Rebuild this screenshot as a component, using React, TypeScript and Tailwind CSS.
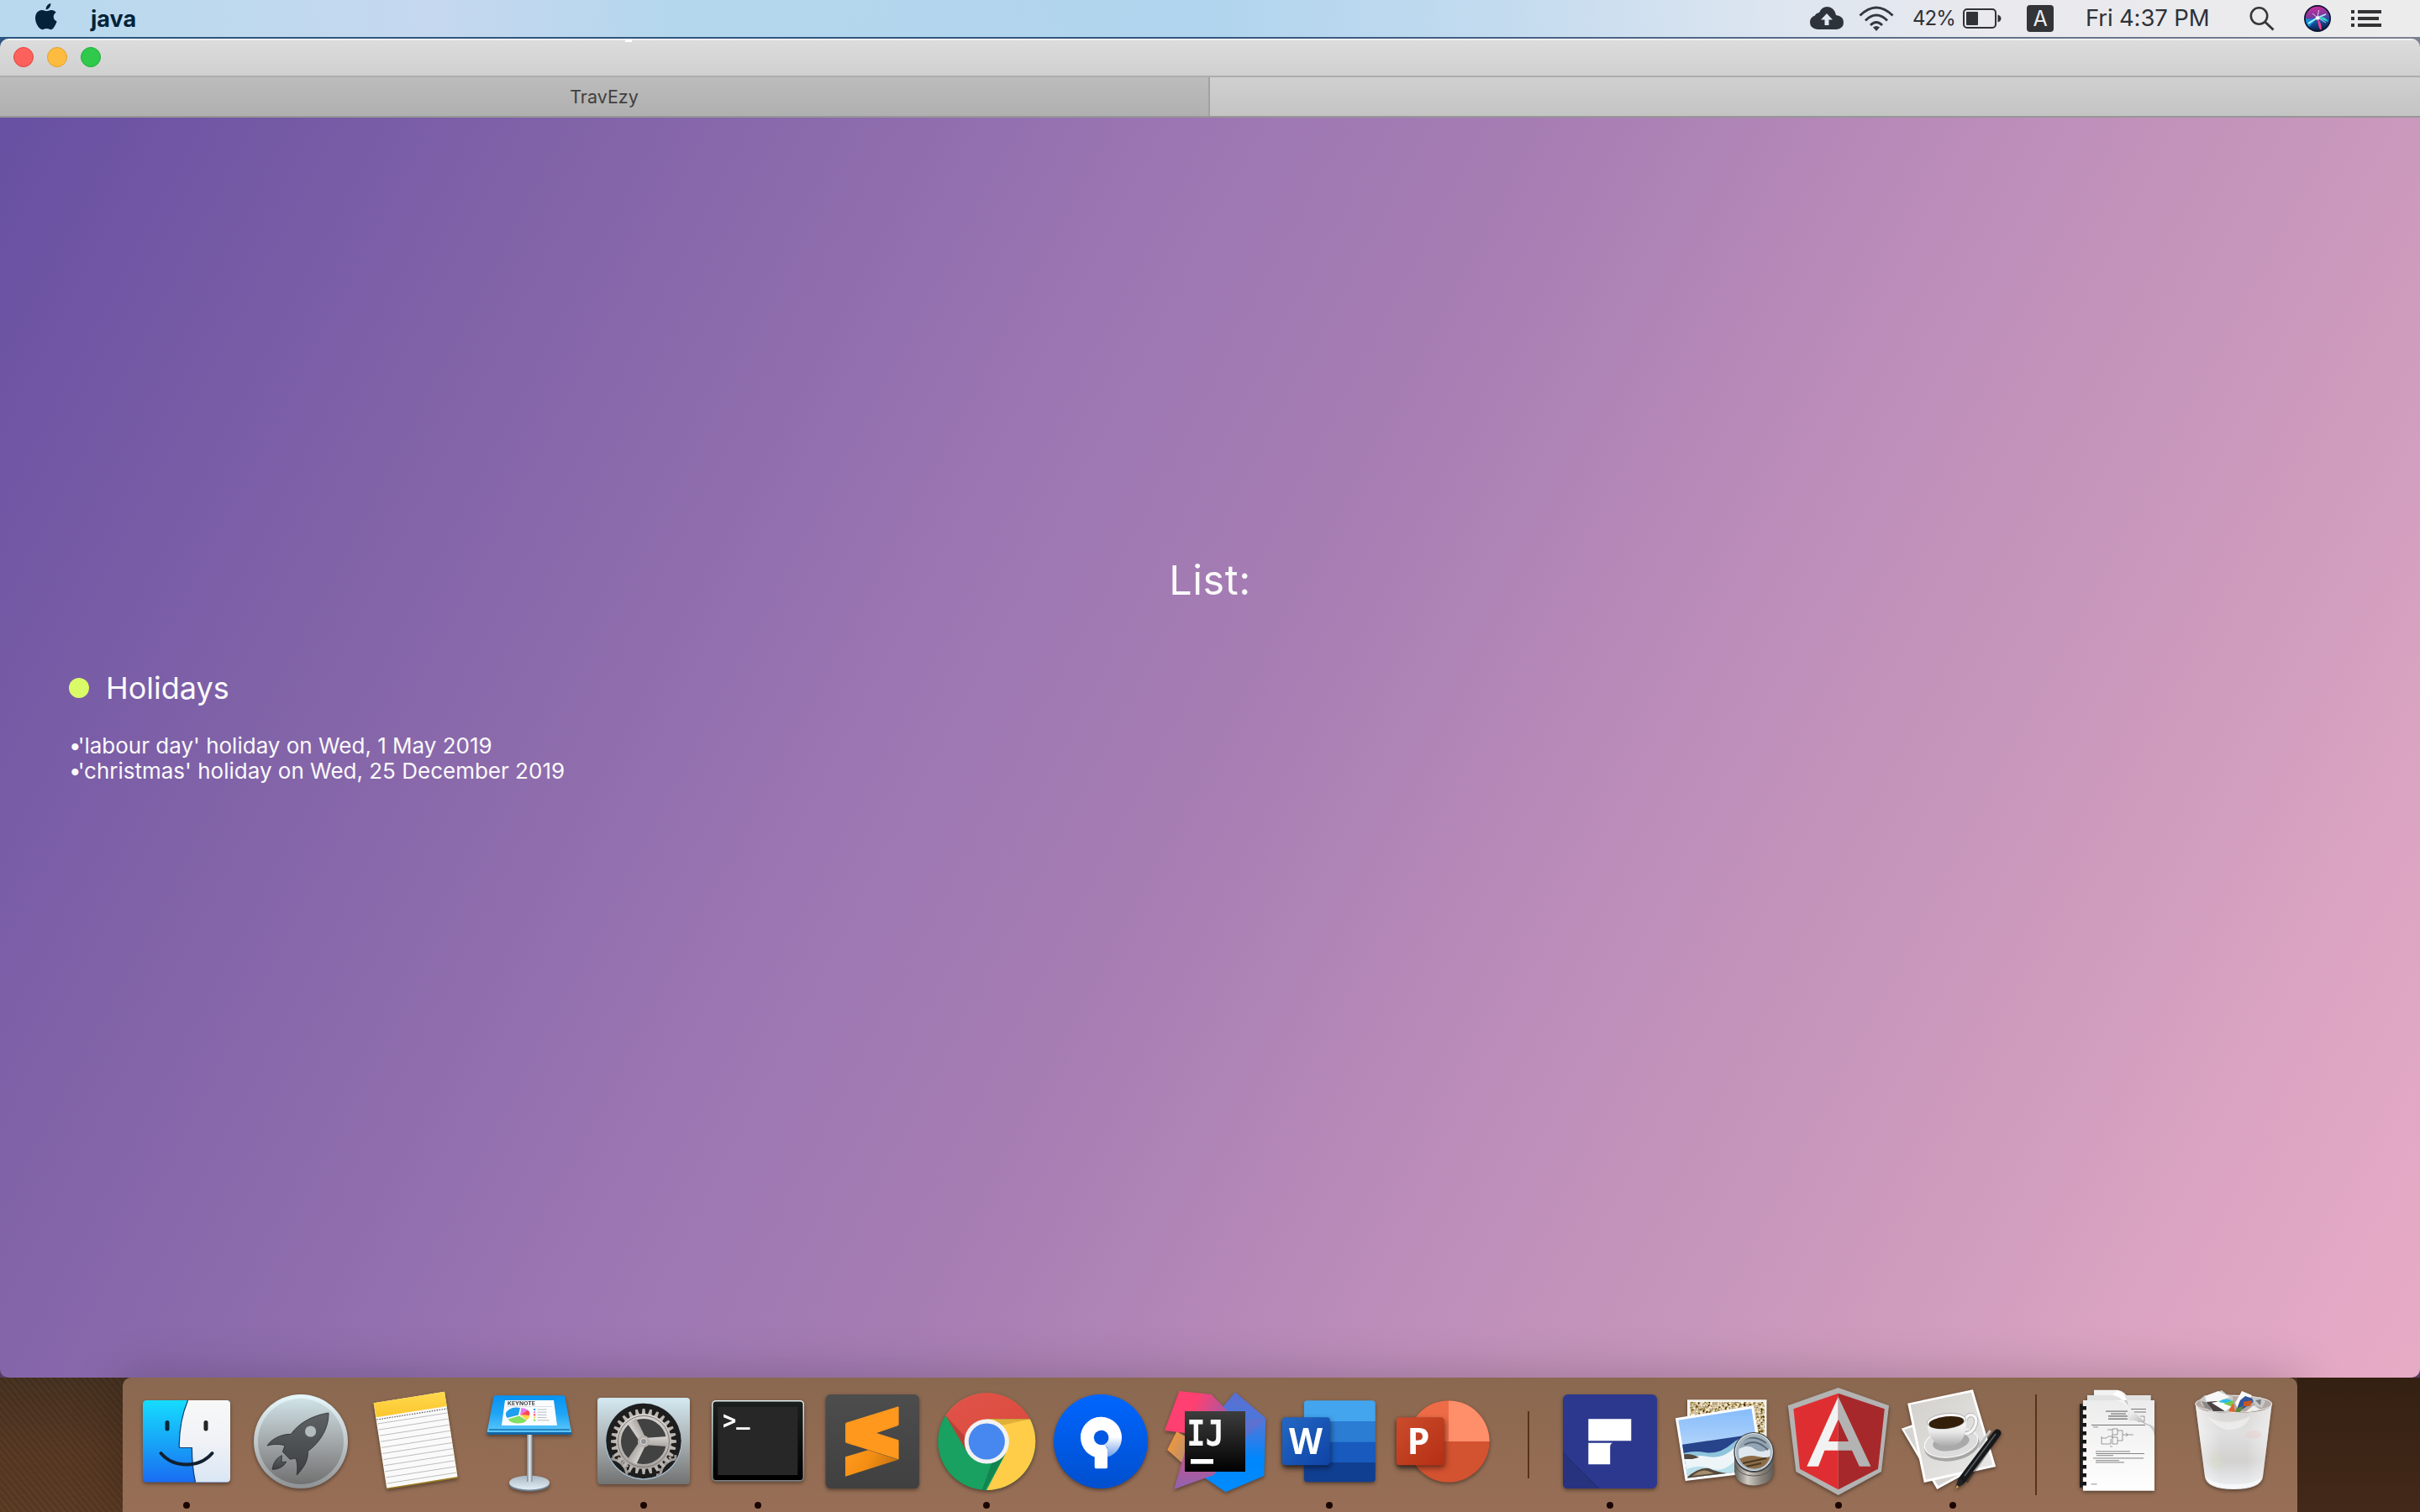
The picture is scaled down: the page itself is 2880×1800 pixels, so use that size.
import React from 'react';

type ArtProps = { children: React.ReactNode; running?: boolean };

function Slot({ children, running }: ArtProps) {
  return (
    <svg className="h-[160px] w-[136px] shrink-0" viewBox="0 0 136 160">
      <g className="drop-shadow-[0_2px_2px_rgba(0,0,0,0.4)]">{children}</g>
      {running && <circle cx="68" cy="152" r="4" fill="#1a0503" />}
    </svg>
  );
}

function Grad({ id, stops, x2 = 0, y2 = 1 }: { id: string; stops: string[]; x2?: number; y2?: number }) {
  return (
    <linearGradient id={id} x1="0" y1="0" x2={x2} y2={y2}>
      {stops.map((c, i) => (
        <stop key={i} offset={i / (stops.length - 1)} stopColor={c} />
      ))}
    </linearGradient>
  );
}

function Finder() {
  return (
    <Slot running>
      <defs>
        <Grad id="fB" stops={['#16dcff', '#17a6f7', '#1a6cf2']} />
        <Grad id="fW" stops={['#f8f8f8', '#f0f2f6', '#d9e6f4']} />
      </defs>
      <rect x="16" y="27" width="104" height="97.5" rx="4.5" fill="url(#fB)" />
      <path d="M69.6 27H115.500Q120 27 120 31.500V120Q120 124.500 115.500 124.500H78.500Q74.500 106 74.400 83.500H61Q59 83.500 59.200 81.500Q59.500 51 69.600 27Z" fill="url(#fW)" />
      <path d="M69.600 27Q59.500 51 59.200 81.500Q59 83.500 61 83.500H74.400Q74.500 106 78.500 124.500" fill="none" stroke="#0b3e75" strokeWidth="1.2" />
      <path d="M45 53.500V61" stroke="#04283a" strokeWidth="5" strokeLinecap="round" />
      <path d="M91 53.500V61" stroke="#252525" strokeWidth="5" strokeLinecap="round" />
      <path d="M37.500 90C53 108 83 108 98.500 90" fill="none" stroke="#12202f" strokeWidth="4" strokeLinecap="round" />
    </Slot>
  );
}

function Launchpad() {
  return (
    <Slot>
      <defs>
        <Grad id="lR" stops={['#e6f8fc', '#c0c8cb', '#8f9294']} />
        <Grad id="lF" stops={['#cfe2e6', '#a3a8aa', '#717171']} />
        <Grad id="lK" stops={['#5e6264', '#3d4042']} />
      </defs>
      <circle cx="68" cy="76" r="56" fill="url(#lR)" />
      <circle cx="68" cy="76" r="51" fill="url(#lF)" />
      <g fill="url(#lK)" stroke="#2a2c2e" strokeWidth="0.8">
        <path d="M101 42C80 45 64 56 56.400 67.300C45 67 33 73 28 81C37 78.500 44 79.500 49 80.700L46.400 88.300L55 97.300L62 96C64.500 104 64 110 63.200 116C72 107 77 98 76.400 87.700C91 77 101.500 60 101 42Z" />
        <path d="M45.400 92.700C38 96 35 103 34 109.300C41 109.500 48 106 50.700 100L45 101Z" />
      </g>
      <circle cx="79.600" cy="64" r="6.600" fill="#b4bbbe" />
    </Slot>
  );
}

function Notes() {
  return (
    <Slot>
      <defs>
        <Grad id="nY" stops={['#ffd94f', '#fcc62c']} />
      </defs>
      <path d="M18.600 30.300L103 16.700L119 119.800L34.400 133Z" fill="#9a7b20" />
      <path d="M18.600 30.300L103 16.700L118.500 118L34.200 131.500Z" fill="#fafafa" />
      <path d="M18.600 30.300L103 16.700L105.800 34L21.900 47.300Z" fill="url(#nY)" />
      <path d="M22.500 50L106 37" stroke="#555" strokeWidth="1.2" strokeDasharray="1.500 1.500" />
      {Array.from({ length: 11 }, (_, i) => (
        <path key={i} d={`M${23.500 + i * 1.100} ${55 + i * 7.100}L${106.500 + i * 1.100} ${42 + i * 7.100}`} stroke="#bdbdbd" strokeWidth="1" />
      ))}
    </Slot>
  );
}

function Keynote() {
  return (
    <Slot>
      <defs>
        <Grad id="kB" stops={['#0693f3', '#1fa5f6', '#5fc8fa']} />
        <Grad id="kP" x2={1} y2={0} stops={['#76828c', '#e3ebf2', '#7d8a95']} />
        <Grad id="kO" stops={['#a9b7c3', '#e3edf5']} />
      </defs>
      <ellipse cx="68" cy="127" rx="24" ry="8.500" fill="#6d7f8e" />
      <ellipse cx="68" cy="125" rx="24" ry="8.500" fill="url(#kO)" />
      <rect x="65" y="66" width="6.600" height="58" fill="url(#kP)" />
      <path d="M17.600 64H118L118 67Q118 68 116.500 68H19Q17.600 68 17.600 66Z" fill="#1464a4" />
      <path d="M27.500 21.300H108.500Q110 21.300 110.300 22.800L118 65H17.600L25.600 22.800Q26 21.300 27.500 21.300Z" fill="url(#kB)" />
      <path d="M20 62H116" stroke="#1571ac" strokeWidth="1.600" />
      <path d="M39 27H97L101 57H35Z" fill="#fbfcfd" />
      <text x="42" y="33" fontSize="6" fontWeight="700" textLength="33" lengthAdjust="spacingAndGlyphs" fill="#3c4248" fontFamily="Inter, sans-serif">KEYNOTE</text>
      <path d="M41 34.500H95" stroke="#c9ccd0" strokeWidth="0.600" />
      <path d="M55 44.500L41.500 48A13 8.500 0 0 1 57 36Z" fill="#1e9fef" />
      <path d="M57 44.500L58.500 36A13 8.500 0 0 1 66 38.500Z" fill="#e37af0" />
      <path d="M57 44.500L66 38.500A13 8 0 0 1 68 45Z" fill="#fb4757" />
      <path d="M57 44.500L68 45A13 8 0 0 1 65 50.500Z" fill="#ffd33e" />
      <path d="M56 45.500L65 51A13 8.500 0 0 1 42.500 49.500Z" fill="#82df62" />
      {['#1e9fef', '#e37af0', '#fb4757', '#ffd33e', '#82df62'].map((c, i) => (
        <g key={c}>
          <rect x="73" y={37 + i * 3.200} width="2.200" height="2" fill={c} />
          <rect x="77.500" y={37.500 + i * 3.200} width={i === 4 ? 14 : 11} height="1" fill="#b9bdc2" />
        </g>
      ))}
    </Slot>
  );
}

function Preferences() {
  return (
    <Slot running>
      <defs>
        <Grad id="pF" stops={['#d4e9f1', '#aab1b4', '#727272']} />
        <Grad id="pG" stops={['#d6d3d0', '#aaa5a1']} />
        <clipPath id="pC"><circle cx="68" cy="76" r="44" /></clipPath>
      </defs>
      <rect x="13" y="24" width="110" height="103" rx="4" fill="url(#pF)" />
      <circle cx="68" cy="76" r="45.500" fill="#a9c3d6" />
      <circle cx="68" cy="75.500" r="44.700" fill="#1d1d1d" />
      <g clipPath="url(#pC)" fill="none" stroke="#a29c98">
        <circle cx="28" cy="117" r="20" strokeWidth="3" />
        <circle cx="28" cy="117" r="23" strokeWidth="4" strokeDasharray="3 3.500" />
        <circle cx="108" cy="117" r="20" strokeWidth="3" />
        <circle cx="108" cy="117" r="23" strokeWidth="4" strokeDasharray="3 3.500" />
      </g>
      <circle cx="68" cy="76" r="28" fill="#424242" />
      {Array.from({ length: 28 }, (_, i) => (
        <path key={i} d="M65.600 44L66.600 37H69.400L70.400 44Z" fill="#bab5b1" transform={`rotate(${(i * 360) / 28} 68 76)`} />
      ))}
      <circle cx="68" cy="76" r="30" fill="none" stroke="url(#pG)" strokeWidth="6" />
      <circle cx="68" cy="76" r="30.500" fill="none" stroke="#77716d" strokeWidth="0.900" />
      {[0, 120, 240].map((a) => (
        <path key={a} d="M68 72L96 70V82L68 80Z" fill="url(#pG)" transform={`rotate(${a} 68 76)`} />
      ))}
      <circle cx="68" cy="76" r="7" fill="#b7b2ae" />
      <circle cx="68" cy="76" r="3.600" fill="#8f9395" stroke="#dcdcdc" strokeWidth="1" />
    </Slot>
  );
}

function Terminal() {
  return (
    <Slot running>
      <defs>
        <Grad id="tB" stops={['#1b201e', '#000']} />
        <Grad id="tE" stops={['#e2f0f2', '#7d8587']} />
      </defs>
      <rect x="13" y="27" width="110" height="96.500" rx="5" fill="url(#tE)" />
      <rect x="14.500" y="28.500" width="107" height="93.500" rx="3.500" fill="url(#tB)" />
      <rect x="20.300" y="35" width="95" height="81" fill="#272727" />
      <text transform="translate(26 60.500) scale(0.900 1)" dy="0 -5.500" fontSize="30" fontWeight="700" fill="#fff" fontFamily="'DejaVu Sans Mono', monospace">&gt;_</text>
    </Slot>
  );
}

function Sublime() {
  return (
    <Slot>
      <defs>
        <Grad id="sB" stops={['#4d4d4d', '#404040']} />
        <Grad id="sO" x2={1} y2={0.3} stops={['#ff9a1e', '#f58f14', '#c87410']} />
      </defs>
      <rect x="12.500" y="20" width="111.500" height="112" rx="6" fill="url(#sB)" />
      <path d="M36 94.300L63 86.300L99 97.700L36 117.700Z" fill="url(#sO)" />
      <path d="M37.500 53.400L98.500 34.500Q99.600 34.300 99.600 35.500V55.500Q99.600 56.700 98.500 57.200L73.200 66L98.500 74Q99.600 74.400 99.600 75.500V97.500L37 77.700Q36 77.300 36 76V55Q36 54 37.500 53.400Z" fill="#ff981c" />
    </Slot>
  );
}

function Chrome() {
  return (
    <Slot running>
      <defs>
        <clipPath id="cC"><circle cx="68.300" cy="76" r="58" /></clipPath>
        <Grad id="cR" x2={1} y2={1} stops={['#e2574c', '#d9453a']} />
      </defs>
      <g clipPath="url(#cC)">
        <rect width="136" height="140" fill="#18a160" />
        <path d="M68.300 49.300H136V140H65L91 90Z" fill="#ffcd48" />
        <path d="M91 90L65 136L62 136L74 102Z" fill="#0c6a40" opacity="0.500" />
        <path d="M0 10H136V49.300H68.300L45.500 89.500L19.400 45Z" fill="url(#cR)" />
        <path d="M19.400 45L45.500 89.500L44 72Z" fill="#7a241d" opacity="0.350" />
        <path d="M76 49.300H120L86 57Z" fill="#a97c1a" opacity="0.350" />
      </g>
      <circle cx="68.300" cy="76" r="26.600" fill="#f2f2f2" />
      <circle cx="68.300" cy="76" r="21.600" fill="#4788f0" />
    </Slot>
  );
}

function Sourcetree() {
  return (
    <Slot>
      <defs>
        <Grad id="stB" stops={['#0066ff', '#004fce']} />
        <Grad id="stS" stops={['#ffffff', '#ffffff', '#6f9fea']} />
      </defs>
      <circle cx="68" cy="76" r="56" fill="url(#stB)" />
      <path d="M44 71.300A24.500 24.500 0 0 1 93 71.300A24.500 24 0 0 1 76 94.500V83L70 80A8.600 8.600 0 1 0 61 75Z" fill="url(#stS)" />
      <path d="M68.400 46.800A24.500 24.500 0 0 0 60.700 94.500V106.500Q60.700 108.300 62.500 108.300H74.500Q76 108.300 76 106.500V87Q76 80 68.400 79.800A8.500 8.500 0 0 1 68.400 63Z" fill="#fff" />
      <circle cx="68.400" cy="71.300" r="8.600" fill="#0059e3" />
    </Slot>
  );
}

function IntelliJ() {
  return (
    <Slot>
      <defs>
        <Grad id="iP" x2={1} y2={0.3} stops={['#ff3f73', '#ff4070', '#b0559f']} />
        <Grad id="iB" stops={['#5a6fd0', '#4a78dc', '#0086fb', '#008cff']} />
        <Grad id="iO" x2={1} y2={0.4} stops={['#ff9a31', '#a98b7a']} />
        <Grad id="iV" stops={['#c8518a', '#9163b0']} />
        <Grad id="iK" stops={['#3d3d3d', '#000000']} />
      </defs>
      <path d="M22.300 64L11.200 86L28 101L50 80Z" fill="url(#iO)" />
      <path d="M92 17.300L128.300 48.300L126.400 117L80.500 136.300L55 119L60 80L77.800 34Z" fill="url(#iB)" />
      <path d="M128.300 48.300L104 73V50Z" fill="#6b6bc5" opacity="0.500" />
      <path d="M33 85L19.200 133L66.300 116L80 100Z" fill="url(#iV)" />
      <path d="M25.400 16L63.600 20L84 41L60 66H32L8 63Z" fill="url(#iP)" />
      <rect x="32" y="40" width="72" height="72" fill="url(#iK)" />
      <text transform="translate(34.200 80.500) scale(0.860 1)" fontFamily="'DejaVu Sans Mono', monospace" fontWeight="700" fontSize="43" fill="#fafafa">IJ</text>
      <rect x="39" y="97" width="27" height="5.700" fill="#fff" />
    </Slot>
  );
}

function Word() {
  return (
    <Slot running>
      <defs>
        <Grad id="wB" x2={1} y2={1} stops={['#2368c4', '#0f43a6']} />
        <clipPath id="wC"><rect x="37.800" y="27.300" width="85" height="97" rx="4" /></clipPath>
      </defs>
      <g clipPath="url(#wC)">
        <rect x="37" y="27" width="87" height="25" fill="#42a5ee" />
        <rect x="37" y="52" width="87" height="25" fill="#2b7cd3" />
        <rect x="37" y="76.700" width="87" height="25" fill="#185abd" />
        <rect x="37" y="101" width="87" height="25" fill="#103f91" />
      </g>
      <rect x="11.900" y="47.300" width="57" height="57" rx="4" fill="url(#wB)" className="drop-shadow-[1px_3px_3px_rgba(0,0,0,0.5)]" />
      <text x="20" y="91" fontSize="43" fontWeight="700" textLength="40" lengthAdjust="spacingAndGlyphs" fill="#fff" fontFamily="'Open Sans', sans-serif">W</text>
    </Slot>
  );
}

function PowerPoint() {
  return (
    <Slot>
      <defs>
        <Grad id="ppB" x2={1} y2={1} stops={['#ca4d2c', '#b62e14']} />
      </defs>
      <circle cx="74" cy="76" r="48.600" fill="#d35230" />
      <path d="M74 27.400V76H25.400A48.600 48.600 0 0 1 74 27.400Z" fill="#ed6c47" />
      <path d="M74 27.400V76H122.600A48.600 48.600 0 0 0 74 27.400Z" fill="#ff8f6b" />
      <rect x="11.700" y="47.300" width="57" height="57" rx="4" fill="url(#ppB)" className="drop-shadow-[1px_3px_3px_rgba(0,0,0,0.5)]" />
      <text x="24.500" y="91" fontSize="43" fontWeight="700" fill="#fff" fontFamily="'Open Sans', sans-serif">P</text>
    </Slot>
  );
}

function BlueF() {
  return (
    <Slot running>
      <rect x="12" y="20" width="112" height="112" rx="6" fill="#2c388e" />
      <path d="M12 89.500L55 132H18Q12 132 12 126Z" fill="#28337f" />
      <path d="M12 89.500L55 132" stroke="#212a6c" strokeWidth="1" />
      <path d="M42.300 49.300H93.300V75.300H42.300ZM42.300 77.700H71.100Q68.200 79 68.200 82V103.300H42.300Z" fill="#fff" />
    </Slot>
  );
}

function Preview() {
  return (
    <Slot>
      <defs>
        <Grad id="vS" stops={['#7fb8fb', '#b9d8fa']} />
        <Grad id="vL" x2={1} y2={0} stops={['#5f5c58', '#d0cbc2', '#8d8880', '#5d5a56']} />
        <filter id="vN" x="0" y="0" width="1" height="1">
          <feTurbulence type="fractalNoise" baseFrequency="0.350" numOctaves="2" seed="4" />
          <feColorMatrix values="2 0 0 0 -0.420  1.900 0 0 0 -0.470  1.700 0 0 0 -0.550  0 0 0 0 1" />
        </filter>
        <clipPath id="vC"><path d="M13.300 50.700L100.500 37L111.500 109L24.500 119.500Z" /></clipPath>
        <clipPath id="vR"><circle cx="104" cy="89.500" r="19" /></clipPath>
      </defs>
      <rect x="24" y="26.300" width="94.500" height="75" fill="#f4f4f0" />
      <rect x="27" y="29.500" width="88.500" height="69" filter="url(#vN)" />
      <path d="M9.900 48.300L103 33.300L115.300 111.700L21.700 123Z" fill="#fff" />
      <g clipPath="url(#vC)">
        <rect x="10" y="30" width="110" height="60" fill="url(#vS)" />
        <path d="M10 81L112 66V130H10Z" fill="#274389" />
        <path d="M10 93Q28 86 45 89T78 78T112 75V130H10Z" fill="#8fc4dc" />
        <path d="M12 103Q30 90 48 94T82 82T112 82V130H12Z" fill="#edf5f9" />
        <path d="M18 112Q34 102 50 108T80 100L110 112V130H18Z" fill="#b9e0ea" />
        <path d="M14 93Q25 88 38 95L30 97L16 97ZM22 120Q38 106 50 108Q58 112 72 114L60 124H22Z" fill="#55483c" />
        <path d="M30 117Q40 109 48 111L56 114Z" fill="#a58e6d" />
      </g>
      <path d="M80 90V112Q82 127.500 103 128.500Q125 127.500 127 112V90Z" fill="url(#vL)" />
      <path d="M80.500 104Q86 117 103.500 117Q121 117 126.500 104" fill="none" stroke="#5a5752" strokeWidth="1" />
      <circle cx="103.300" cy="89" r="24" fill="#3d4247" />
      <circle cx="103.300" cy="88.500" r="22" fill="#a6b3bb" stroke="#dfe6ea" strokeWidth="1.200" />
      <g clipPath="url(#vR)">
        <rect x="80" y="65" width="50" height="50" fill="#93a5b4" />
        <path d="M84 86Q96 78 104 85T126 82V96H84Z" fill="#dfe8ee" />
        <path d="M84 98Q96 91 108 94T126 92V112H84Z" fill="#8c6c47" />
        <path d="M88 76Q102 66 118 78M92 80Q106 72 120 86" stroke="#5b6873" strokeWidth="2" fill="none" />
        <path d="M90 102L118 96M94 106L112 102" stroke="#4a3824" strokeWidth="2" />
      </g>
    </Slot>
  );
}

function Angular() {
  return (
    <Slot running>
      <path d="M67.700 12L128 33.300L119 112L67.700 140L17.400 112L7.800 33.300Z" fill="#b3b3b3" />
      <path d="M67.700 18.700L122.800 37.300L115 108.700L67.700 133.300V18.700Z" fill="#a6282b" />
      <path d="M67.700 18.700L14.400 37.300L22 108.700L67.700 133.300Z" fill="#df2e31" />
      <path d="M67.700 22.700L30.300 105.700H44L51.400 86.700H67.700V76H56L67.700 49.500Z" fill="#f2f2f2" />
      <path d="M67.700 22.700L106.500 105.700H92.800L84 86.700H67.700V76H80L67.700 49.500Z" fill="#b3b3b3" />
    </Slot>
  );
}

function TextEdit() {
  return (
    <Slot running>
      <defs>
        <Grad id="eP" x2={1} y2={1} stops={['#d2d0cc', '#e9e9e8']} />
        <Grad id="eC" stops={['#ffffff', '#e8e8e8', '#a9a9a9']} />
      </defs>
      <path d="M6.800 60.700L60 42L95 108L49.300 133Z" fill="#fff" />
      <path d="M10 62L60 46L90 108L50.500 129Z" fill="#d5d4d2" />
      <path d="M14.200 30.700L91.900 14.300L119.200 106L33.800 125Z" fill="#fff" />
      <path d="M17.500 32.500L90 17.500L115.500 104L36 121.500Z" fill="url(#eP)" />
      <ellipse cx="67" cy="81" rx="33" ry="18" fill="#7f7f7f" opacity="0.600" transform="rotate(-10 67 81)" />
      <ellipse cx="66" cy="77.500" rx="32" ry="17" fill="#dcdcdc" stroke="#fafafa" strokeWidth="1.200" transform="rotate(-10 66 77.500)" />
      <ellipse cx="66" cy="77" rx="22" ry="10" fill="#a9a9a9" transform="rotate(-10 66 77)" />
      <path d="M83 51Q84 44 91 44.500Q97.500 47 95 56Q92 66 83 67" fill="none" stroke="#a9a9a9" strokeWidth="5" />
      <path d="M83 51Q84 44 91 44.500Q97.500 47 95 56Q92 66 83 67" fill="none" stroke="#f5f5f5" strokeWidth="3.500" />
      <path d="M37.500 53Q38 72 50 79Q62 85.500 75 78Q85 71 83.500 48Z" fill="url(#eC)" />
      <ellipse cx="60.400" cy="51.700" rx="23" ry="9" fill="#f7f7f7" stroke="#9a9a9a" strokeWidth="0.700" transform="rotate(-6 60.400 51.700)" />
      <ellipse cx="60.400" cy="53.500" rx="21" ry="7.300" fill="#34200a" transform="rotate(-6 60.400 53.500)" />
      <path d="M116 62L78 118" stroke="#000" strokeOpacity="0.350" strokeWidth="9" transform="translate(4 5)" />
      <path d="M121 66L78.500 122.500" stroke="#17181a" strokeWidth="9" strokeLinecap="round" />
      <path d="M75 119L82 126L70.500 133Z" fill="#222" />
      <path d="M73 128L70.500 133L75.500 130Z" fill="#d3a44c" />
      <path d="M112 64L99 82" stroke="#bfc2c5" strokeWidth="3" strokeLinecap="round" />
      <path d="M119 67L82 117" stroke="#5b5f63" strokeWidth="1.500" />
    </Slot>
  );
}

function Documents() {
  return (
    <Slot>
      <defs>
        <Grad id="dP" stops={['#ececec', '#ffffff']} />
        <Grad id="dC" x2={1} y2={1} stops={['#ffffff', '#ededed', '#a9a9a9']} />
      </defs>
      <path d="M38 14.700H66Q76 16 80 27H38Z" fill="#f1f1f1" />
      <rect x="30" y="21" width="75.700" height="10" fill="#e2e2e2" />
      <rect x="25" y="27" width="85" height="107.700" fill="url(#dP)" />
      <rect x="21" y="31.300" width="3.300" height="99.500" fill="#1c1c1c" />
      {Array.from({ length: 10 }, (_, i) => (
        <rect key={i} x="24" y={34 + i * 10} width="5" height="4.500" fill="#161616" />
      ))}
      <g fill="#777">
        <rect x="52" y="39.500" width="26" height="1.200" /><rect x="58" y="42.500" width="18" height="1.200" />
        <rect x="55" y="45.200" width="23" height="1.400" /><rect x="55" y="48.500" width="23" height="1.400" />
        <rect x="82" y="37" width="18" height="1" /><rect x="84" y="40.500" width="16" height="1" />
        <rect x="35" y="56" width="64" height="1" /><rect x="37" y="58.500" width="6" height="0.800" />
        <rect x="40" y="87.500" width="41" height="0.900" /><rect x="40" y="90" width="58" height="0.900" /><rect x="41" y="92.300" width="20" height="0.900" />
        <rect x="37" y="95.500" width="60" height="0.900" /><rect x="40" y="98.300" width="28" height="0.900" /><rect x="40" y="100.500" width="34" height="0.900" />
        <rect x="34.500" y="126.500" width="7" height="0.800" />
      </g>
      <g fill="none" stroke="#777" strokeWidth="0.700">
        <path d="M47 70V79H58V73M47 72H53L55 70H60M60 61H66V68H60ZM60 71H66V79H60ZM66 63H72V75H66M72 68H85M76 66Q80 68 76 70M54 62H60M60 68V72M57 82H60" />
        <path d="M93 46H98V52H90" />
      </g>
      <path d="M66 14.700Q74 16 77 27Q80 33 79 50Q92 48 104 58Q109 62 110 70L110 134L110 60Q108 56 98 54L80 36Z" fill="#8d8d8d" opacity="0.400" />
      <path d="M64 27Q76 28 79 38Q80 44 79 51.500Q90 49 102 57Q90 44 80 36Q76 28 70 27Z" fill="url(#dC)" />
      <path d="M66 14.700Q74 17 77 27H72Q68 22 60 21Z" fill="#fff" />
    </Slot>
  );
}

function Trash() {
  return (
    <Slot>
      <defs>
        <Grad id="bB" stops={['#d6d3d2', '#e0dfdf', '#d2d1d0', '#eef1f5']} />
        <Grad id="bS" x2={1} y2={0} stops={['#ffffff', '#ffffff00', '#ffffff00', '#f4f4f4']} />
      </defs>
      <ellipse cx="68.200" cy="31.300" rx="45.500" ry="10" fill="#b3a8a3" stroke="#e9e6e4" strokeWidth="1.200" />
      <g>
        <path d="M28 26L34 21L44 24L50 17L54 15L60 20L67 21L68 41H40L30 32Z" fill="#c9c9c9" />
        <path d="M34 22L50 16L64 23L50 28L36 29Z" fill="#f7f7f7" />
        <path d="M30 28L38 30L42 39L34 36Z" fill="#8b8886" />
        <path d="M36 29L48 28L58 40L44 40Z" fill="#4b4342" />
        <path d="M42 30L62 26L66 34L58 40Z" fill="#fff" />
        <path d="M50 29Q58 23 66 27L62 31Z" fill="#2bbfe9" />
        <path d="M56 31L68 27L67 35Z" fill="#7cc84b" />
        <path d="M62 40L68 30L70 41Z" fill="#e2632f" />
        <path d="M70 30L78 16L90 21L84 30L74 40Z" fill="#fafafa" />
        <path d="M76 27L82 22L94 26L88 32L78 38L72 37Z" fill="#31559c" />
        <path d="M80 29L90 27L88 34L80 34Z" fill="#c8571f" />
        <path d="M72 36L80 34L76 41H70Z" fill="#5d873d" />
        <path d="M90 24L100 23L106 28L102 36L94 34Z" fill="#c7c9ca" />
        <path d="M94 27L101 26L100 33Z" fill="#77797b" />
        <path d="M82 41L92 33L100 38Z" fill="#eee" />
      </g>
      <path d="M22.700 31.500Q26 42 68.200 42Q110 42 113.700 31.500L103 118Q101 132.500 68.200 133Q36 132.500 34 118Z" fill="url(#bB)" />
      <path d="M22.700 31.500Q26 42 68.200 42Q110 42 113.700 31.500L103 118Q101 132.500 68.200 133Q36 132.500 34 118Z" fill="url(#bS)" opacity="0.600" />
      <path d="M36 46Q60 60 88 46Q82 62 62 62Q50 62 36 46Z" fill="#fafafa" opacity="0.500" />
      <ellipse cx="92" cy="68" rx="9" ry="5" fill="#e9c4ba" opacity="0.300" />
      <ellipse cx="48" cy="100" rx="8" ry="10" fill="#d6dfc4" opacity="0.350" />
      <path d="M36 119Q44 127 68 127T101 119Q99 131 68 132Q38 131 36 119Z" fill="#fff" opacity="0.600" />
    </Slot>
  );
}

function MenuBar() {
  return (
    <header className="flex h-[44px] shrink-0 items-center bg-[linear-gradient(90deg,#b8d9ee_0%,#bfd9ee_10%,#c5d8ef_18%,#b4d7ed_28%,#b1d5ee_50%,#c3dbef_62%,#dce5f0_73%,#e9e9ee_82%,#ececec_100%)]">
      <svg className="ml-[42px] h-[32px] w-[26px] -translate-y-[2px]" viewBox="0 0 26 32" fill="#04223a">
        <path d="M18.400 0C18.600 3.800 15.900 7.300 12.700 7.400C12.300 3.800 15.400 .4 18.400 0Z" />
        <path d="M13.300 9.200C15 9.200 16.600 7.800 19.200 7.900C21.600 8 23.500 9 24.700 10.700C20.300 13.400 21 19.600 25.600 21.400C24.300 25.500 21.500 31 18.600 31.200C16.700 31.200 15.900 30 13.500 30C11.100 30 10.200 31.200 8.400 31.200C4.500 31.200 0 23.600 0 17.600C0 11.400 3.900 8.100 7.600 8C10 8 11.700 9.200 13.300 9.200Z" />
      </svg>
      <span className="ml-[40px] font-['Inter'] text-[27px] leading-none font-bold text-[#04223a]">java</span>
      <div className="ml-auto flex h-full items-center text-[#2f3137]">
        <svg className="h-[28px] w-[40px]" viewBox="0 0 40 28" fill="#2d323b">
          <path d="M9 27Q0 26 0 18.500Q0 12.500 6 10.500Q7 7.500 11 7Q14 0 20.500 0Q29 .5 31 10Q40 11 40 18.500Q40 26 32 27Z" />
          <path d="M20 8L27 15.500H22.500V22H17.500V15.500H13Z" fill="#e0e7f1" />
        </svg>
        <svg className="ml-[18px] h-[30px] w-[42px]" viewBox="0 0 42 30" fill="none" stroke="#34373e" strokeWidth="3">
          <path d="M1.500 11.500Q21 -7.500 40.500 11.500M8 17.500Q21 4.500 34 17.500M14 23Q21 16 28 23" />
          <path d="M17 25.500Q21 22.500 25 25.500L21 30Z" fill="#34373e" stroke="none" />
        </svg>
        <span className="ml-[22px] w-[50px] font-['Inter'] text-[24px] leading-none tracking-[-0.9px] whitespace-nowrap">42%</span>
        <svg className="ml-[10px] h-[24px] w-[46px]" viewBox="0 0 46 24" fill="#303238">
          <rect x="1" y="1" width="38" height="22" rx="4" fill="none" stroke="#303238" strokeWidth="2" />
          <rect x="4" y="4" width="14" height="16" rx="1" />
          <path d="M41.500 7.500Q45.500 9 45.500 12T41.500 16.500Z" />
        </svg>
        <div className="ml-[30px] flex h-[32px] w-[32px] items-center justify-center rounded-[4px] bg-[#333438] font-['Inter'] text-[25px] leading-none text-[#ebebee]">A</div>
        <span className="ml-[38px] w-[151px] font-['Inter'] text-[27.5px] leading-none tracking-[-0.15px] whitespace-nowrap">Fri 4:37 PM</span>
        <svg className="ml-[44px] h-[29px] w-[30px]" viewBox="0 0 30 29" fill="none" stroke="#37373a" strokeWidth="2.600">
          <circle cx="11.500" cy="11" r="9.700" />
          <path d="M18.500 18L28.500 27.500" strokeWidth="3" />
        </svg>
        <svg className="ml-[35px] h-[32px] w-[32px]" viewBox="0 0 32 32">
          <defs>
            <linearGradient id="siri" x1="0.300" y1="0" x2="0.500" y2="1">
              <stop offset="0" stopColor="#d02c9c" />
              <stop offset="0.400" stopColor="#7c3a9c" />
              <stop offset="0.650" stopColor="#1353a5" />
              <stop offset="1" stopColor="#0a1c46" />
            </linearGradient>
          </defs>
          <circle cx="16" cy="16" r="16" fill="#0c1330" />
          <circle cx="16" cy="16" r="14.300" fill="url(#siri)" />
          <path d="M2 16Q10 18 16 15Q11 21 6 26Q2 22 2 16Z" fill="#1590d0" />
          <path d="M16 15Q25 12 29 20Q22 18 16 15Z" fill="#2fd3c8" />
          <path d="M15 15Q22 22 20.500 29.500Q17 30 16 15Z" fill="#f0408a" />
          <path d="M5 22L16 15L26 11" stroke="#a9f4f6" strokeWidth="1.800" fill="none" />
          <path d="M10 10L16 15L26 21M17.500 6L16 15" stroke="#f3d9f4" strokeWidth="0.900" fill="none" />
          <circle cx="16" cy="15.500" r="2.300" fill="#fff" opacity="0.900" />
        </svg>
        <svg className="mr-[46px] ml-[24px] h-[20px] w-[36px]" viewBox="0 0 36 20" fill="#333336">
          <path d="M0 0H4V4H0ZM8 0H36V4H8ZM0 8H4V12H0ZM8 8H33V12H8ZM0 16H4V20H0ZM8 16H36V20H8Z" />
        </svg>
      </div>
    </header>
  );
}

function TitleBar() {
  return (
    <div className="relative flex h-[44px] shrink-0 items-center gap-4 border-t-2 border-[#f0f0f0] bg-linear-to-b from-[#dcdcdc] to-[#d0d0d0] pb-[2px] pl-4">
      <i className="size-[24px] rounded-full border border-[#e24640] bg-[#fc615c]" />
      <i className="size-[24px] rounded-full border border-[#dfa032] bg-[#fdbc40]" />
      <i className="size-[24px] rounded-full border border-[#1eac38] bg-[#2fca4c]" />
      <i className="absolute -top-[2px] left-[744px] h-[4px] w-[8px] bg-white" />
    </div>
  );
}

function TabBar() {
  return (
    <div className="flex h-[50px] shrink-0 border-t-2 border-b-2 border-t-[#adadad] border-b-[#979797]">
      <div className="flex w-[1440px] items-center justify-center border-r-2 border-[#a2a2a2] bg-linear-to-b from-[#bcbcbc] to-[#b0b0b0] pt-[2px] font-['Inter'] text-[21.5px] leading-none text-[#404040]">
        TravEzy
      </div>
      <div className="flex-1 bg-linear-to-b from-[#d0d0d0] to-[#c4c4c4]" />
    </div>
  );
}

function Content() {
  return (
    <main className="flex flex-1 flex-col bg-[linear-gradient(117.5deg,#6850a2_0%,#8465a9_21%,#9e78b3_41%,#a67db3_50%,#bd8eba_66%,#cb99bc_79%,#dba4c2_90%,#e8abc6_100%)] font-['Inter'] text-[#fafafa]">
      <h1 className="mt-[522px] text-center text-[48.5px] leading-[58px] tracking-[0.6px]">List:</h1>
      <section className="mt-[77px] ml-[82px]">
        <h2 className="flex items-center gap-[20px] text-[36px] leading-[44px]">
          <i className="size-[24px] rounded-full bg-[#dbfa67]" />
          Holidays
        </h2>
        <ul className="mt-[32px] text-[26px] leading-[30px] whitespace-nowrap">
          <li><span className="tracking-[-4px]">•</span>'labour day' holiday on Wed, 1 May 2019</li>
          <li><span className="tracking-[-4px]">•</span>'christmas' holiday on Wed, 25 December 2019</li>
        </ul>
      </section>
    </main>
  );
}

function Separator({ tall }: { tall?: boolean }) {
  return (
    <div className="flex h-full w-[62px] shrink-0 justify-center">
      <i className={tall ? 'mt-[20px] h-[120px] w-[2px] bg-[#56331a]' : 'mt-[40px] ml-[3px] h-[80px] w-[2px] bg-[#56331a]'} />
    </div>
  );
}

function Dock() {
  return (
    <div className="flex h-[160px] shrink-0 bg-[repeating-linear-gradient(50deg,#0000000d_0px,#0000000d_2px,#ffffff05_4px,#ffffff05_6px),linear-gradient(180deg,#45301f_0%,#553722_50%,#5a3a22_100%)]">
      <div className="w-[146px] shrink-0" />
      <nav className="flex h-full w-[2588px] shrink-0 rounded-t-[10px] bg-[linear-gradient(180deg,#8a6850_0%,#916b52_50%,#986f56_100%)] px-[8px] shadow-[0_0_60px_rgba(0,0,0,0.22)]">
        <Finder />
        <Launchpad />
        <Notes />
        <Keynote />
        <Preferences />
        <Terminal />
        <Sublime />
        <Chrome />
        <Sourcetree />
        <IntelliJ />
        <Word />
        <PowerPoint />
        <Separator />
        <BlueF />
        <Preview />
        <Angular />
        <TextEdit />
        <Separator tall />
        <Documents />
        <Trash />
      </nav>
      <div className="flex-1 bg-linear-to-b from-[#342012] to-[#432919]" />
    </div>
  );
}

export default function App() {
  return (
    <div className="flex h-[1800px] w-[2880px] flex-col overflow-hidden bg-[#40291b]">
      <MenuBar />
      <div className="flex min-h-0 flex-1 flex-col bg-[linear-gradient(180deg,transparent_50%,#543f62_100%),linear-gradient(90deg,#2c5580,#35577f_50%,#7c8192)] pt-[2px]">
        <div className="flex flex-1 flex-col overflow-hidden rounded-[10px]">
          <TitleBar />
          <TabBar />
          <Content />
        </div>
      </div>
      <Dock />
    </div>
  );
}
